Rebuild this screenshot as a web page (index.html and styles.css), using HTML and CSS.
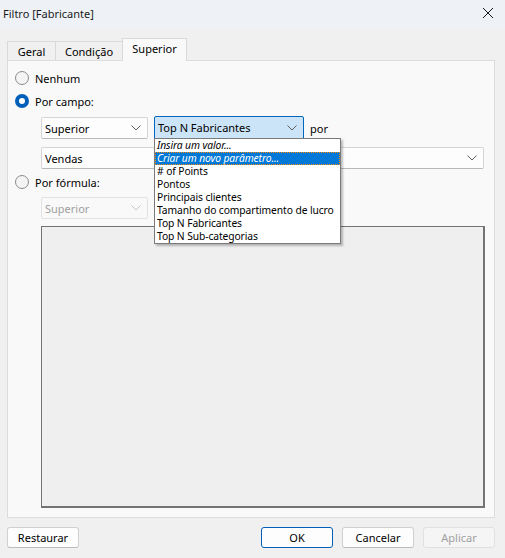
FILE: index.html
```html
<!DOCTYPE html>
<html>
<head>
<meta charset="utf-8">
<link rel="stylesheet" href="styles.css">
</head>
<body>
<div class="window">
  <div class="titlebar">
    <span class="title">Filtro [Fabricante]</span>
    <svg class="close" width="12" height="12" viewBox="0 0 12 12"><path d="M1 1 L11 11 M11 1 L1 11" stroke="#1a1a1a" stroke-width="1" fill="none"/></svg>
  </div>
  <div class="tabs">
    <div class="tab">Geral</div>
    <div class="tab">Condição</div>
    <div class="tab active">Superior</div>
  </div>
  <div class="panel">
    <div class="radio-row"><span class="radio"></span><span>Nenhum</span></div>
    <div class="radio-row"><span class="radio checked"></span><span>Por campo:</span></div>
    <div class="row row1">
      <div class="select small"><span>Superior</span><svg class="chev" width="10" height="6" viewBox="0 0 10 6"><path d="M0.5 0.5 L5 5 L9.5 0.5" stroke="#5f5f5f" fill="none"/></svg></div>
      <div class="combo-wrap">
        <div class="select focused"><span>Top N Fabricantes</span><svg class="chev" width="10" height="6" viewBox="0 0 10 6"><path d="M0.5 0.5 L5 5 L9.5 0.5" stroke="#5f5f5f" fill="none"/></svg></div>
        <ul class="dropdown">
          <li class="it">Insira um valor...</li>
          <li class="it sel">Criar um novo parâmetro...</li>
          <li># of Points</li>
          <li>Pontos</li>
          <li>Principais clientes</li>
          <li>Tamanho do compartimento de lucro</li>
          <li>Top N Fabricantes</li>
          <li>Top N Sub-categorias</li>
        </ul>
      </div>
      <span class="por">por</span>
    </div>
    <div class="row row2">
      <div class="select wide"><span>Vendas</span><svg class="chev" width="10" height="6" viewBox="0 0 10 6"><path d="M0.5 0.5 L5 5 L9.5 0.5" stroke="#5f5f5f" fill="none"/></svg></div>
    </div>
    <div class="radio-row r3"><span class="radio"></span><span>Por fórmula:</span></div>
    <div class="row row3">
      <div class="select small disabled"><span>Superior</span><svg class="chev" width="10" height="6" viewBox="0 0 10 6"><path d="M0.5 0.5 L5 5 L9.5 0.5" stroke="#c4c4c4" fill="none"/></svg></div>
    </div>
    <div class="formula"></div>
  </div>
  <div class="buttons">
    <button class="btn">Restaurar</button>
    <div class="spacer"></div>
    <button class="btn primary">OK</button>
    <button class="btn">Cancelar</button>
    <button class="btn disabled">Aplicar</button>
  </div>
</div>
</body>
</html>
```
FILE: styles.css
```css
* { box-sizing: border-box; }
html, body { margin: 0; padding: 0; }
body {
  width: 505px;
  height: 558px;
  background: #f0f0f0;
  font-family: "Noto Sans", "Open Sans", sans-serif;
  font-size: 11px;
  color: #000;
  overflow: hidden;
}
.window { width: 505px; height: 558px; display: flex; flex-direction: column; }
.titlebar {
  height: 28px;
  background: #eef2f7;
  display: flex;
  align-items: center;
  justify-content: space-between;
  padding: 0 11px 2px 3px;
  flex-shrink: 0;
}
.title { font-size: 11px; color: #1a1a1a; }
.close { display: block; }
.tabs {
  display: flex;
  align-items: flex-end;
  padding: 11px 0 0 7px;
  height: 32px;
  flex-shrink: 0;
}
.tab {
  height: 19px;
  border: 1px solid #d9d9d9;
  border-bottom: none;
  border-right: none;
  background: #f0f0f0;
  display: flex;
  align-items: center;
  justify-content: center;
  line-height: 1;
}
.tab:nth-child(1) { width: 48px; }
.tab:nth-child(2) { width: 67px; }
.tab.active {
  width: 65px;
  height: 23px;
  background: #f9f9f9;
  border-right: 1px solid #d9d9d9;
  padding-bottom: 3px;
  position: relative;
  margin-bottom: -1px;
}
.panel {
  margin: 0 10px 0 7px;
  height: 458px;
  background: #f9f9f9;
  border: 1px solid #dcdcdc;
  padding: 10px 0 0 7px;
  display: flex;
  flex-direction: column;
  flex-shrink: 0;
}
.radio-row {
  display: flex;
  align-items: center;
  gap: 6px;
  height: 14px;
  margin-top: 0;
}
.radio-row + .radio-row { margin-top: 9px; }
.radio {
  width: 14px;
  height: 14px;
  border-radius: 50%;
  border: 1px solid #8a8a8a;
  background: #f4f4f4;
  flex-shrink: 0;
}
.radio.checked {
  border: 4px solid #005fb8;
  background: #ffffff;
}
.row { display: flex; align-items: center; padding-left: 26px; position: relative; }
.row1 { margin-top: 9px; gap: 6px; }
.row2 { margin-top: 8px; }
.r3 { margin-top: 6px; }
.row3 { margin-top: 8px; }
.select {
  height: 22px;
  border: 1px solid #d5d5d5;
  border-bottom-color: #b9b9b9;
  border-radius: 2px;
  background: #fdfdfd;
  display: flex;
  align-items: center;
  justify-content: space-between;
  padding: 0 6px 0 3px;
}
.select span { line-height: 1; }
.chev { display: block; }
.small { width: 107px; }
.wide { width: 443px; }
.combo-wrap { position: relative; }
.select.focused {
  width: 150px;
  height: 23px;
  margin-top: -1px;
  background: #cce4f7;
  border: 1px solid #0067c0;
  border-radius: 2px 2px 0 0;
}
.por { margin-left: 0; }
.disabled { color: #a0a0a0; }
.select.disabled { background: #f9f9f9; border-color: #e2e2e2; }
.dropdown {
  position: absolute;
  left: 0;
  top: 21px;
  width: 187px;
  margin: 0;
  padding: 0;
  list-style: none;
  background: #ffffff;
  border: 1px solid #7a7a7a;
  box-shadow: 2px 2px 2px rgba(0,0,0,0.25);
  z-index: 5;
}
.dropdown li {
  height: 13px;
  line-height: 13px;
  padding-left: 2px;
  white-space: nowrap;
  font-size: 10.3px;
  letter-spacing: -0.1px;
}
.dropdown li.it { font-style: italic; }
.dropdown li.sel {
  background: #0078d7;
  color: #ffffff;
  outline: 1px dotted #ff8c00;
  outline-offset: -1px;
}
.formula {
  margin: 7px 0 0 26px;
  width: 444px;
  height: 282px;
  background: #efefef;
  border: 2px solid #737373;
  border-top-width: 1px;
  border-left-width: 1px;
}
.buttons {
  display: flex;
  padding: 9px 10px 0 7px;
  gap: 9px;
}
.spacer { flex: 1; }
.btn {
  width: 72px;
  height: 21px;
  font-family: inherit;
  font-size: 11px;
  background: #fdfdfd;
  border: 1px solid #d0d0d0;
  border-bottom-color: #bcbcbc;
  border-radius: 3px;
  padding: 0;
  color: #000;
  line-height: 1;
}
.btn.primary { border: 1px solid #005fb8; }
.btn.disabled { background: #f5f5f5; color: #a0a0a0; border-color: #e0e0e0; }
```
